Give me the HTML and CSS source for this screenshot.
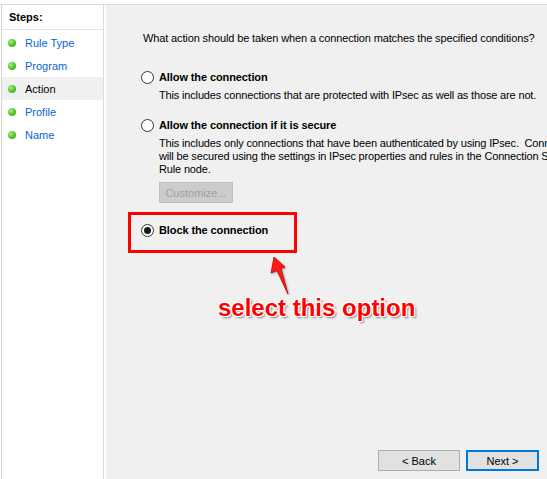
FILE: index.html
```html
<!DOCTYPE html>
<html>
<head>
<meta charset="utf-8">
<link rel="stylesheet" href="styles.css">
</head>
<body>
<div class="window">
  <aside class="sidebar">
    <div class="steps-head">Steps:</div>
    <ul class="steps">
      <li class="step"><span class="dot"></span><span class="link">Rule Type</span></li>
      <li class="step"><span class="dot"></span><span class="link">Program</span></li>
      <li class="step current"><span class="dot"></span><span>Action</span></li>
      <li class="step"><span class="dot"></span><span class="link">Profile</span></li>
      <li class="step"><span class="dot"></span><span class="link">Name</span></li>
    </ul>
  </aside>
  <main class="content">
    <p class="question">What action should be taken when a connection matches the specified conditions?</p>

    <div class="option first">
      <span class="radio"></span><span class="label">Allow the connection</span>
    </div>
    <p class="desc">This includes connections that are protected with IPsec as well as those are not.</p>

    <div class="option second">
      <span class="radio"></span><span class="label">Allow the connection if it is secure</span>
    </div>
    <p class="desc">This includes only connections that have been authenticated by using IPsec.&nbsp; Connections<br>will be secured using the settings in IPsec properties and rules in the Connection Security<br>Rule node.</p>
    <button class="customize" disabled>Customize...</button>

    <div class="option third">
      <span class="radio checked"></span><span class="label">Block the connection</span>
    </div>

    <div class="buttons">
      <button class="btn">&lt; Back</button>
      <button class="btn primary">Next &gt;</button>
    </div>

    <div class="highlight"></div>
    <svg class="arrow" width="26" height="44" viewBox="0 0 26 44">
      <polygon points="6,3 17,13 13,14.5 20,40 9,16.5 3,19" fill="#ff1a1a" stroke="#c00000" stroke-width="0.8" stroke-linejoin="round"/>
    </svg>
    <div class="callout">select this option</div>
  </main>
</div>
</body>
</html>
```

FILE: styles.css
```css
* { box-sizing: border-box; }
html, body { margin: 0; padding: 0; background: #fff; }
body {
  font-family: "Liberation Sans", Arial, sans-serif;
  font-size: 11px;
  color: #000;
  overflow: hidden;
  width: 547px;
  height: 479px;
}
.window {
  margin-top: 4px;
  border-top: 1px solid #dcdcdc;
  height: 475px;
  display: flex;
}
.sidebar {
  width: 103px;
  margin-left: 1px;
  border-left: 1px solid #d4d4d4;
  border-right: 1px solid #dcdcdc;
  background: #fff;
  flex: none;
}
.steps-head {
  height: 25px;
  border-bottom: 1px solid #e3e3e3;
  font-weight: bold;
  padding-left: 7px;
  line-height: 24px;
}
.steps {
  list-style: none;
  margin: 1px 0 0;
  padding: 0;
}
.step {
  height: 23px;
  display: flex;
  align-items: center;
  padding-left: 6px;
}
.step.current { background: #f0f0f0; }
.dot {
  width: 8px;
  height: 8px;
  border-radius: 50%;
  background: radial-gradient(circle at 35% 35%, #a8ee80 0%, #5ccb33 45%, #2f9a14 100%);
  margin-right: 9px;
}
.link { color: #0a64d2; }

.content {
  position: relative;
  flex: 1;
  margin-left: 2px;
  background: #f0f0f0;
  padding: 26px 8px 8px 35px;
  display: flex;
  flex-direction: column;
  align-items: flex-start;
  overflow: hidden;
  white-space: nowrap;
}
.question {
  margin: 0 0 0 2px;
  line-height: 14px;
  letter-spacing: -0.13px;
}
.option {
  display: flex;
  align-items: center;
  height: 16px;
}
.option.first { margin-top: 24px; }
.option.second { margin-top: 15px; }
.option.third { margin-top: 19px; }
.radio {
  width: 13px;
  height: 13px;
  border: 1px solid #333;
  border-radius: 50%;
  background: #fff;
  margin-right: 5px;
  flex: none;
  display: flex;
  align-items: center;
  justify-content: center;
}
.radio.checked::after {
  content: "";
  width: 7px;
  height: 7px;
  border-radius: 50%;
  background: #1a1a1a;
}
.label { font-weight: bold; letter-spacing: -0.1px; }
.desc {
  margin: 4px 0 0 18px;
  line-height: 13px;
  letter-spacing: -0.16px;
}
.customize {
  margin: 6px 0 0 18px;
  width: 74px;
  height: 21px;
  background: #cccccc;
  border: 1px solid #bfbfbf;
  color: #a0a0a0;
  font: inherit;
  padding: 0;
}
.buttons {
  margin-top: auto;
  align-self: stretch;
  display: flex;
  justify-content: flex-end;
  gap: 6px;
}
.btn {
  width: 82px;
  height: 21px;
  background: #e1e1e1;
  border: 1px solid #adadad;
  font: inherit;
  color: #000;
  padding: 0;
}
.btn.primary {
  width: 73px;
  border: 2px solid #0078d7;
}
.highlight {
  position: absolute;
  left: 22px;
  top: 207px;
  width: 169px;
  height: 41px;
  border: 3px solid #ff0000;
}
.arrow {
  position: absolute;
  left: 162px;
  top: 249px;
  filter: drop-shadow(1px 1px 1px rgba(0,0,0,0.35));
}
.callout {
  position: absolute;
  left: 112px;
  top: 289px;
  font-size: 24px;
  line-height: 28px;
  font-weight: bold;
  color: #ff0000;
  text-shadow:
    1px 0 0 #fff, -1px 0 0 #fff, 0 1px 0 #fff, 0 -1px 0 #fff,
    1px 1px 0 #fff, -1px -1px 0 #fff, 1px -1px 0 #fff, -1px 1px 0 #fff,
    2px 2px 2px rgba(0,0,0,0.45);
}
```
